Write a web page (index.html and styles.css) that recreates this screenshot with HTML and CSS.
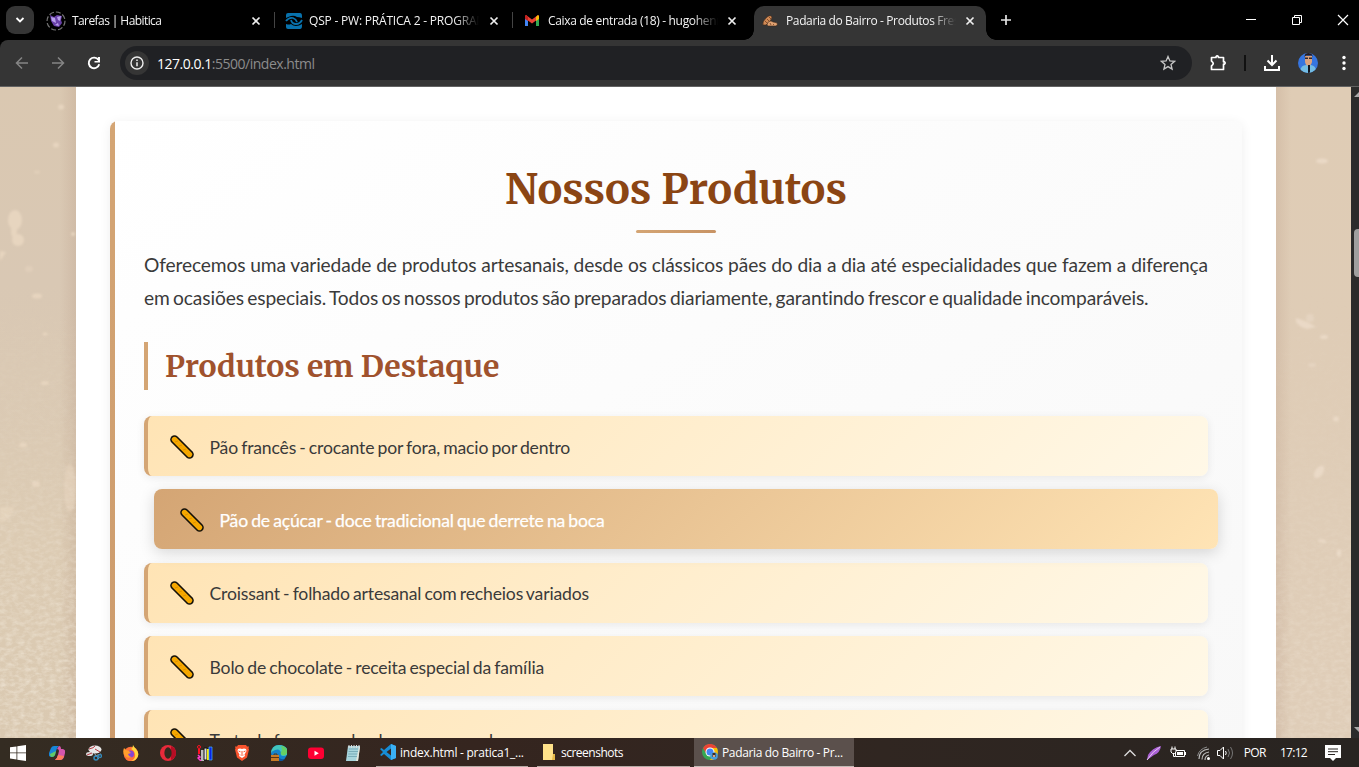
FILE: index.html
```html
<!DOCTYPE html>
<html lang="pt-BR">
<head>
<meta charset="utf-8">
<title>Padaria do Bairro - Produtos Frescos</title>
<link rel="stylesheet" href="styles.css">
</head>
<body>
<svg class="defs" aria-hidden="true">
  <symbol id="x" viewBox="0 0 10 10"><path d="M1.5 1.5l7 7M8.500 1.500l-7 7" fill="none" stroke="#eee" stroke-width="1.700"/></symbol>
  <symbol id="baguette" viewBox="0 0 26 26"><path d="M5.500 5.500L20.500 20.500" stroke="#14110a" stroke-width="8.600" stroke-linecap="round"/><path d="M5.500 5.500L20.500 20.500" stroke="#f5a700" stroke-width="5.400" stroke-linecap="round"/><path d="M6 8l3-1M10 12l3-1M14 16l3-1" stroke="#d98d00" stroke-width=".8"/></symbol>
</svg>
<div class="screen">
  <header class="tabstrip">
    <div class="tab-search"><svg width="10" height="10" viewBox="0 0 10 10"><path d="M1.500 3l3.500 3.500L8.500 3" fill="none" stroke="#fff" stroke-width="1.800"/></svg></div>
    <div class="tab">
      <svg class="fav" viewBox="0 0 20 20"><circle cx="10" cy="10" r="9" fill="none" stroke="#777" stroke-width="1.200" stroke-dasharray="5 2"/><path d="M4 4l4 2 3-2 5 1-1 4 1 3-3 4-5-1-3-5z" fill="#6840a8"/><path d="M5 6l4 1 1 5-4-2zM11 6l4-1-1 5-2-1zM9 14l3-2 1 3z" fill="#b9a0eb"/></svg>
      <span class="title t1">Tarefas | Habitica</span><svg class="close"><use href="#x"/></svg>
    </div>
    <div class="tab">
      <svg class="fav f2" viewBox="0 0 20 20"><path d="M2 4q0-2 2-2h12q2 0 2 3v2q-3-1-5-1-3-2-6-1-3 1-5 2zM2 16q0 2 2 2h12q2 0 2-3v-2q-3 2-6 2-3 0-5-2-2 1-5 0z" fill="#0872ad"/><path d="M2 10q3-4 7-3 3 1 4 4M7 9q1 4 5 4 4 0 6-4" fill="none" stroke="#0872ad" stroke-width="1.800"/></svg>
      <span class="title t2">QSP - PW: PRÁTICA 2 - PROGRAMAÇÃO</span><svg class="close"><use href="#x"/></svg>
    </div>
    <div class="tab">
      <svg class="fav gm" viewBox="0 0 16 16"><path d="M1 4v9h3V6z" fill="#4285f4"/><path d="M15 4v9h-3V6z" fill="#34a853"/><path d="M1 3l1-1 6 4.500L14 2l1 1-1 3-6 4.500L2 6z" fill="#ea4335"/><path d="M12 4l2-2 1 1v3l-3 2z" fill="#fbbc04"/><path d="M1 3l1-1 2 1.500V8L1 6z" fill="#c5221f"/></svg>
      <span class="title t3">Caixa de entrada (18) - hugohenrique</span><svg class="close"><use href="#x"/></svg>
    </div>
    <div class="tab active">
      <svg class="fav gm" viewBox="0 0 16 16"><path d="M1 12Q0 9 4 5q4-4 6-1 0 3-6 8z" fill="#d18a55" stroke="#3b2517" stroke-width=".6"/><path d="M5 12q0-3 3-4 2 0 3 1 4 0 4.500 2 0 2-2 2H6z" fill="#e0a271" stroke="#3b2517" stroke-width=".6"/><path d="M3 8l2 2M5 6l2 2M7 4l2 2M8 10l1 2M11 11l1 1" stroke="#754020" stroke-width=".8"/></svg>
      <span class="title t4">Padaria do Bairro - Produtos Frescos</span><svg class="close"><use href="#x"/></svg>
    </div>
    <svg class="newtab" viewBox="0 0 12 12"><path d="M6 1v10M1 6h10" stroke="#e4e4e4" stroke-width="1.700"/></svg>
    <div class="winbtns">
      <svg width="12" height="12"><path d="M1 5.500h10" stroke="#fff"/></svg>
      <svg width="12" height="12"><path d="M1.500 3.500h7v7h-7zM3.500 3.500v-2h7v7h-2" fill="none" stroke="#fff"/></svg>
      <svg width="12" height="12"><path d="M1 1l10 10M11 1L1 11" stroke="#fff" stroke-width="1.200"/></svg>
    </div>
  </header>
  <nav class="toolbar">
    <svg class="nav" viewBox="0 0 16 16"><path d="M14 8H3M8 2.500L2.500 8 8 13.500" fill="none" stroke="#858585" stroke-width="1.500"/></svg>
    <svg class="nav" viewBox="0 0 16 16"><path d="M2 8h11M8 2.500L13.500 8 8 13.500" fill="none" stroke="#858585" stroke-width="1.500"/></svg>
    <svg class="nav" viewBox="0 0 16 16"><path d="M12.500 5A5.300 5.300 0 1 0 13.200 9.200" fill="none" stroke="#fff" stroke-width="1.900"/><path d="M14 2v5.500H8.500V6H12V2z" fill="#fff"/></svg>
    <div class="omnibox">
      <span class="info"><svg width="14" height="14"><circle cx="7" cy="7" r="6" fill="none" stroke="#eee" stroke-width="1.400"/><path d="M7 6.200v4M7 3.500v1.500" stroke="#eee" stroke-width="1.500"/></svg></span>
      <span class="url"><b>127.0.0.1</b>:5500/index.html</span>
      <svg class="star" viewBox="0 0 16 16"><path d="M8 1.500l1.900 4.400 4.700.4-3.600 3.100 1.100 4.700L8 11.600l-4.100 2.500L5 9.400 1.400 6.300l4.700-.4z" fill="none" stroke="#c7c7c7" stroke-width="1.300"/></svg>
    </div>
    <div class="actions">
      <svg width="18" height="18" viewBox="0 0 18 18"><path d="M2.500 3.500H7V2.700q1.200-1.700 2.400 0v.8H14.500v4.300h.8q1.700 1.200 0 2.400h-.8v5.300h-12v-3.600q3.500-2.400 0-4.800z" fill="none" stroke="#fff" stroke-width="1.700" stroke-linejoin="round"/></svg>
      <i class="divider"></i>
      <svg width="18" height="18" viewBox="0 0 18 18"><path d="M9 1v9M4.500 6.500L9 11l4.500-4.500M2 12v4h14v-4" fill="none" stroke="#fff" stroke-width="2"/></svg>
      <svg width="20" height="20" viewBox="0 0 20 20"><defs><clipPath id="av"><circle cx="10" cy="10" r="10"/></clipPath></defs><g clip-path="url(#av)"><path d="M0 0h20v20H0z" fill="#3675df"/><path d="M2 18q1-6 6-6h5q5 1 5 6v3H2z" fill="#73bce3"/><path d="M7 3h7v6q-1 4-4 4-3-1-3-5z" fill="#dba37e"/><path d="M6.500 4q0-4 4-4t4 4l-1-1.500H8z" fill="#2a1b18"/><path d="M7 4.500h3v1.500H7zm4 0h3v1.500h-3z" fill="#332629"/><path d="M10 12h2v8h-2z" fill="#121722"/></g></svg>
      <svg class="dots" width="4" height="16"><circle cx="2" cy="2.500" r="1.700" fill="#fff"/><circle cx="2" cy="8" r="1.700" fill="#fff"/><circle cx="2" cy="13.500" r="1.700" fill="#fff"/></svg>
    </div>
  </nav>
  <section class="viewport">
    <div class="paper">
      <svg width="76" height="651"><defs><filter id="soft"><feGaussianBlur stdDeviation="1.300"/></filter>
        <filter id="grain" x="0" y="0" width="100%" height="100%"><feTurbulence type="fractalNoise" baseFrequency=".16 .26" numOctaves="3" seed="5"/><feColorMatrix values="0 0 0 0 .92 0 0 0 0 .86 0 0 0 0 .76 1.800 0 0 0 -.65"/></filter>
        <linearGradient id="fade" x1="0" y1="0" x2="0" y2="1"><stop offset=".3" stop-color="#000"/><stop offset=".6" stop-color="#333"/><stop offset=".9" stop-color="#bbb"/></linearGradient><mask id="gm"><path fill="url(#fade)" d="M0 0h76v651H0z"/></mask></defs>
        <g filter="url(#soft)" fill="#e7d5bf"><ellipse cx="61" cy="20" rx="3" ry="2.500"/><ellipse cx="56" cy="58" rx="3" ry="2.500"/><ellipse cx="37" cy="85" rx="3" ry="1.500" opacity=".6"/><ellipse cx="15" cy="133" rx="7" ry="10"/><ellipse cx="14" cy="144" rx="3" ry="7"/><ellipse cx="18" cy="153" rx="6" ry="6"/><ellipse cx="73" cy="147" rx="2" ry="2"/><path d="M0 164l6 1-6 9z"/><ellipse cx="37" cy="209" rx="5" ry="2.500"/><ellipse cx="29" cy="182" rx="4" ry="3" opacity=".5"/><ellipse cx="45" cy="247" rx="2.500" ry="1.500"/><ellipse cx="45" cy="296" rx="4" ry="2"/><ellipse cx="23" cy="358" rx="4" ry="2.500"/><ellipse cx="36" cy="397" rx="4" ry="3"/><ellipse cx="70" cy="401" rx="6" ry="24" opacity=".6"/><path d="M0 420h14q-2 12-14 16z" opacity=".7"/></g>
        <g mask="url(#gm)" opacity=".75"><path d="M0 0h76v651H0z" filter="url(#grain)"/></g></svg>
    </div>
    <main class="container">
      <article class="card">
        <h1>Nossos Produtos</h1>
        <p class="intro">Oferecemos uma variedade de produtos artesanais, desde os clássicos pães do dia a dia até especialidades que fazem a diferença em&nbsp;ocasiões especiais. Todos os nossos produtos são preparados diariamente, garantindo frescor e qualidade incomparáveis.</p>
        <h2>Produtos em Destaque</h2>
        <ul>
          <li><svg><use href="#baguette"/></svg><span>Pão francês - crocante por fora, macio por dentro</span></li>
          <li class="hover"><svg><use href="#baguette"/></svg><span>Pão de açúcar - doce tradicional que derrete na boca</span></li>
          <li><svg><use href="#baguette"/></svg><span>Croissant - folhado artesanal com recheios variados</span></li>
          <li><svg><use href="#baguette"/></svg><span>Bolo de chocolate - receita especial da família</span></li>
          <li><svg><use href="#baguette"/></svg><span>Torta de frango - salgada cremosa e saborosa</span></li>
        </ul>
      </article>
    </main>
    <div class="paper right">
      <svg width="75" height="651"><g filter="url(#soft)" fill="#ead9c6"><ellipse cx="46" cy="74" rx="6" ry="2.500"/><path d="M20 231q11 3 20 9l-9 2q-8-2-11-7z"/><ellipse cx="34" cy="231" rx="4" ry="4" opacity=".6"/><ellipse cx="48" cy="250" rx="4" ry="2"/><ellipse cx="36" cy="278" rx="4" ry="2" opacity=".6"/><ellipse cx="60" cy="332" rx="3" ry="2.500"/><ellipse cx="43" cy="385" rx="4" ry="7" transform="rotate(35 43 385)"/><ellipse cx="63" cy="466" rx="2" ry="4"/><ellipse cx="46" cy="454" rx="4" ry="1.500"/></g><g mask="url(#gm)" opacity=".35"><path d="M0 0h76v651H0z" filter="url(#grain)"/></g></svg>
    </div>
    <div class="scroll"><svg width="8" height="651"><path d="M3 10l5-5v5zM3 640h5v5z" fill="#aaa"/><rect x="3" y="142" width="12" height="48" rx="4" fill="#9f9f9f"/></svg></div>
  </section>
  <footer class="taskbar">
    <div class="icons">
      <svg viewBox="0 0 16 16"><path d="M0 2.300L6.500 1.400V7.500H0zM7.300 1.300L16 0V7.500H7.300zM0 8.300h6.500v6.200L0 13.600zM7.300 8.300H16V16l-8.700-1.300z" fill="#fff"/></svg>
      <svg viewBox="0 0 16 16"><path d="M2 3q1-2 3-2h5q-2 1-3 5l-1 4q-1 2-3 2H2q-3-1-2-4z" fill="#1785d8"/><path d="M1 9l6-3-1 4q-1 2-3 2-2 0-2-3z" fill="#62c866"/><path d="M10 1q2 0 2 3h2q3 1 2 4l-1 4q-1 3-4 3H6q2-1 3-5l1-4q0-2-2-2z" fill="#d456ad"/><path d="M6 15q2-1 3-5l6 1q-1 4-4 4z" fill="#ff7c5d"/></svg>
      <svg viewBox="0 0 16 16"><ellipse cx="9" cy="4.500" rx="6.500" ry="4" fill="#e8e8e8"/><path d="M3 4q5-1 6-3M9 4l5 3" stroke="#b63a42" fill="none"/><ellipse cx="3.500" cy="9" rx="3.500" ry="2" fill="#ddd"/><path d="M1 10l5-2" stroke="#b63a42"/><path d="M8 8l5 6M15 9l-6 2" stroke="#aaa"/><circle cx="10" cy="13" r="2" fill="none" stroke="#3389b9" stroke-width="1.500"/><circle cx="14" cy="11" r="1.500" fill="none" stroke="#3389b9" stroke-width="1.300"/></svg>
      <svg viewBox="0 0 16 16"><circle cx="8" cy="9" r="7.300" fill="#ff7139"/><path d="M10 0q1 2 3 4 4 5 1 9-2 3-6 3 5-2 4-7-1-4-4-5 2-1 2-4z" fill="#ffd83f"/><circle cx="7.500" cy="9" r="3.500" fill="#8545d5"/><path d="M1 3l2 2 3 1 2 2-3 1q1 3 4 3-4 2-7-1T1 3z" fill="#ff9e2c"/></svg>
      <svg viewBox="0 0 16 16"><ellipse cx="8" cy="8" rx="8" ry="8" fill="#e82a3a"/><path d="M11 1q5 2 5 7t-5 7z" fill="#b70d24"/><ellipse cx="8" cy="8" rx="3.600" ry="5.800" fill="#33291f"/></svg>
      <svg viewBox="0 0 16 16"><path d="M4 5h3v11H4z" fill="#bbb"/><path d="M7 3h3v12H7z" fill="#ddd" stroke="#111"/><path d="M10 4h2v11h-2z" fill="#f4e900"/><path d="M12 2h3v13h-3z" fill="#0824e8" stroke="#46b7ff" stroke-width=".7"/><circle cx="2" cy="2" r="1.500" fill="none" stroke="#f12"/><path d="M2 4v5" stroke="#f12" stroke-width="2"/><path d="M1 10l2 2-2 1 3 3" stroke="#ff3fd0" stroke-width="1.500" fill="none"/></svg>
      <svg viewBox="0 0 16 16"><path d="M4 0h8l1 1.500h2l-.5 2 .5 1-2 8-5 3.500-5-3.500-2-8 .5-1-.5-2h2z" fill="#f9532d"/><path d="M4 4l2-.5 2 .5 2-.5 2 .5.500 2-2 3.500.5 1.500L8 13l-3-2 .5-1.500L3.500 6z" fill="#fff"/><path d="M4.500 6l2 .8M11.500 6l-2 .8M8 6v3M6.500 10h3" stroke="#f9532d"/></svg>
      <svg viewBox="0 0 16 16"><circle cx="8" cy="8" r="8" fill="#1383cb"/><path d="M0 8q1-8 8-8 8 0 9 7 0 4-5 4-3 0-2-3Q9 3 4 5 1 6 0 8z" fill="#42c6bd"/><path d="M10 1q7 1 6 7-1 3-5 2-2-1-1-3 2-2 0-6z" fill="#65d064"/><path d="M8 8q-2 7 6 6-3 3-7 2z" fill="#0b559e"/><path d="M0 10h8v6H0z" fill="#c67b25"/><path d="M0 12.500h8M3 10V9h3v1" stroke="#593312" fill="none"/></svg>
      <svg viewBox="0 0 16 16"><rect y="2.500" width="16" height="11.500" rx="3" fill="#ff0033"/><path d="M6.500 5.700v5l4.300-2.500z" fill="#fff"/></svg>
      <svg viewBox="0 0 16 16"><path d="M3 1h12l-2 15H1z" fill="#a8d5dc"/><path d="M4 4h9M3.600 6.500H13M3.300 9h9.300M3 11.500h9" stroke="#659ca9" stroke-width=".7"/><path d="M14 2l1 0-2 14h-2z" fill="#e6e6db"/><path d="M4 0v3M6.500 0v3M9 0v3M11.500 0v3M14 0v3" stroke="#ddd"/></svg>
    </div>
    <div class="task"><svg viewBox="0 0 16 16"><path d="M11 0l5 2v12l-5 2-7-6-2.500 2L0 11l3-3-3-3 1.500-1L4 6zm0 4.500L6.500 8l4.500 3.500z" fill="#168dd5"/><path d="M11 0l5 2v12l-5 2z" fill="#3bb1f4"/></svg><span class="k1">index.html - pratica1_...</span></div>
    <div class="task mid"><svg viewBox="0 0 16 16"><path d="M2 0h10v10h2v6H2z" fill="#ffe28a"/><path d="M12 10h2v6h-3z" fill="#e6b948"/></svg><span class="k2">screenshots</span></div>
    <div class="task on"><svg viewBox="0 0 16 16"><circle cx="8" cy="8" r="8" fill="#35a853"/><path d="M1 4A8 8 0 0 1 15 4H8L4.500 10z" fill="#ea4335"/><path d="M8 4h7q3 7-4 12H8l4-7z" fill="#fbbc04"/><circle cx="8" cy="8" r="4.500" fill="#fff"/><circle cx="8" cy="8" r="3.500" fill="#4285f4"/><circle cx="12" cy="12" r="3.800" fill="#4a9dda"/><path d="M10.500 9h3v4h-3z" fill="#3b2b28"/><path d="M11 11h2v2h-2z" fill="#dda57c"/></svg><span class="k3">Padaria do Bairro - Pr...</span></div>
    <div class="tray">
      <svg width="14" height="16"><path d="M1.500 11L7 5.500 12.500 11" fill="none" stroke="#ddd" stroke-width="1.300"/></svg>
      <svg width="16" height="16"><path d="M1 15L2 10Q6 3 15 1q-1 7-7 9z" fill="#aa61d5"/><path d="M1 15Q7 6 14 2" stroke="#e6c7f3" fill="none"/></svg>
      <svg width="16" height="16"><path d="M5.500 5.500h9v6h-9zM15.500 7v3" fill="none" stroke="#fff"/><path d="M7 7h6v3H7z" fill="#fff"/><path d="M1 4h5v3L4.500 8.500h-2L1 7zM2 4V1.500M5 4V1.500M3.500 8.500v3h2" fill="#302621" stroke="#fff"/></svg>
      <svg width="16" height="16"><g fill="none" stroke="#bbb" stroke-width="1.200"><path d="M3 14Q3 5 13 4M6 14.500Q6 8 13 7M9 15Q9 11 13 10"/></g><path d="M1.500 11Q3 4 11 2" fill="none" stroke="#888"/><circle cx="12.500" cy="13.500" r="1.500" fill="#fff"/></svg>
      <svg width="18" height="16"><path d="M1.500 5.500H4L7.500 2v12L4 10.500H1.500z" fill="none" stroke="#fff"/><path d="M9.500 6q1.500 2 0 4" fill="none" stroke="#fff"/><path d="M12 4q3 4 0 8M14.500 2q4 6 0 12" fill="none" stroke="#777"/></svg>
      <span class="lang">POR</span><span class="clock">17:12</span>
      <svg class="note" width="16" height="16"><path d="M0 0h16v13h-5l-3 3-3-3H0z" fill="#fff"/><path d="M3 4h10M3 6.700h10M3 9.500h7" stroke="#292421"/></svg>
    </div>
  </footer>
</div>
</body>
</html>
```
FILE: styles.css
```css
*{box-sizing:border-box}
body{margin:0;overflow:hidden;font-family:"Segoe UI","Open Sans","Noto Sans",sans-serif;background:#000}
svg{display:block;flex:none}
.defs{position:absolute;width:0;height:0}
.screen{width:1359px;height:767px;display:grid;grid-template-rows:40px 47px 651px 29px}
.tabstrip{display:flex;background:#000;color:#f3f3f3;padding-left:6px}
.tab-search{width:28px;height:28px;margin:6px 6px 0 0;border-radius:9px;background:#353535;display:grid;place-items:center}
.tab{position:relative;width:232px;height:34px;margin:6px 6px 0 0;display:flex;align-items:center;padding:0 11px 5px 6px}
.tab:not(.active)::after{content:"";position:absolute;left:234px;top:6px;width:1px;height:16px;background:#444}
.tab:nth-child(4)::after{display:none}
.active{background:#353535;border-radius:10px 10px 0 0}
.active::before,.active::after{content:"";position:absolute;bottom:0;width:10px;height:10px}
.active::before{left:-10px;background:radial-gradient(circle at 0 0,transparent 9.5px,#353535 10px)}
.active::after{right:-10px;background:radial-gradient(circle at 100% 0,transparent 9.5px,#353535 10px)}
.fav{width:20px;height:20px;margin-right:6px}
.f2{margin-right:5px}
.gm{width:16px;height:16px;margin:0 8px 0 2px}
.title{width:170px;flex:none;font-size:12px;line-height:18px;white-space:nowrap;overflow:hidden;-webkit-mask-image:linear-gradient(90deg,#000 145px,transparent 170px);mask-image:linear-gradient(90deg,#000 145px,transparent 170px)}
.t1{letter-spacing:-.58px}.t2{letter-spacing:-.2px}.t3{letter-spacing:-.33px}.t4{letter-spacing:-.38px}
.close{width:10px;height:10px;margin-left:auto}
.newtab{width:12px;height:12px;margin:14px 0 0 8px}
.winbtns{display:flex;gap:34px;margin:14px 10px 0 auto}
.toolbar{display:flex;align-items:center;background:#353535;border-bottom:1px solid #626262;padding:0 13px 0 14px;border-radius:8px 0 0}
.nav{width:16px;height:16px;margin-right:20px}
.nav:nth-child(3){margin-right:18px}
.omnibox{width:1072px;height:34px;margin-right:17px;border-radius:17px;background:#202124;display:flex;align-items:center;padding:0 16px 0 5px}
.info{width:24px;height:24px;border-radius:50%;background:#353535;display:grid;place-items:center;margin-right:8px}
.url{font-size:14px;color:#8c8c8c;letter-spacing:-.48px;white-space:nowrap}
.url b{font-weight:400;color:#fff}
.star{width:16px;height:16px;margin-left:auto}
.actions{display:flex;align-items:center;gap:17px}
.dots{margin-left:7px}
.divider{width:2px;height:16px;background:#111}
.viewport{display:grid;grid-template-columns:76px 1200px 75px 8px;overflow:hidden;background:#fff}
.paper{overflow:hidden;background:linear-gradient(90deg,transparent 60px,rgba(150,110,90,.14)),linear-gradient(#dac8b1,#d9c8b4 30%,#dccbb3 70%,#dac9b1)}
.right{background:linear-gradient(270deg,transparent 60px,rgba(150,110,90,.14)),linear-gradient(#dfccb5,#dfcdb8)}
.container{padding:34px;overflow:hidden;background:#fff}
.card{height:900px;padding:29px 34px;border-radius:8px;background:linear-gradient(#d4a574,#c99668) 0 0/5px 100% no-repeat,linear-gradient(145deg,#fff,#f8f8f8 85%);box-shadow:0 2px 12px rgba(0,0,0,.07)}
.card h1{margin:0;height:101px;padding-top:10px;text-align:center;color:#8b4513;font:700 41.6px/58px "Merriweather","Liberation Serif",serif}
.card h1::after{content:"";display:block;width:80px;height:3px;margin:12px auto 0;border-radius:2px;background:linear-gradient(90deg,#d4a574,#c89364)}
.intro{margin:-3px 0 28px;color:#3a3a3a;font:19.2px/33px Lato,sans-serif;letter-spacing:-.13px;word-spacing:-1.35px;font-variant-ligatures:none;text-align:justify}
.card h2{margin:0 0 26px;height:48px;padding-left:17px;border-left:4px solid #d4a574;color:#a0522d;font:700 30.2px/48px "Merriweather","Liberation Serif",serif}
.card ul{list-style:none;margin:0;padding:0;display:grid;gap:13.4px}
.card li{height:60px;display:flex;align-items:center;padding:3px 20px 0 21px;border-left:4px solid #d4a574;border-radius:8px;background:linear-gradient(135deg,#ffe4b5,#fff8e7);color:#3a3a3a;box-shadow:0 2px 8px rgba(0,0,0,.08);font:17.6px/30px Lato,sans-serif;letter-spacing:-.17px;word-spacing:-1.15px;font-variant-ligatures:none}
.card li svg{width:26px;height:26px;margin:0 14.5px 2px 0}
.card li.hover{transform:translateX(10px);color:#fff;border-color:transparent;background:linear-gradient(135deg,#d4a574,#ffe4b5) border-box;box-shadow:0 4px 15px rgba(0,0,0,.15);-webkit-text-stroke:.25px #fff}
.scroll{background:#2b2b2b}
.taskbar{display:flex;position:relative;background:linear-gradient(90deg,#342c22,#35251f 35%,#302621 65%,#282421);color:#fff}
.icons{display:flex;gap:21px;padding:7px 0 0 10px;width:376px}
.icons svg:first-child{margin-right:2px}
.icons svg,.task svg{width:16px;height:16px}
.task{width:152px;display:flex;align-items:center;padding:0 0 0 4px;border-bottom:1px solid #b5aaa4;font-size:12px;white-space:nowrap}
.task svg{margin-right:4px}
.mid{width:153px;margin:0 4px 0 9px}
.on{width:160px;background:#5b504c;border-bottom-color:#c2bab5;padding-left:8px}
.k1{letter-spacing:-.25px}.k2{letter-spacing:-.5px}.k3{letter-spacing:-.35px}
.tray{margin-left:auto;display:flex;align-items:center;padding-right:18px;font-size:12px}
.tray svg{margin-right:9px}
.tray svg:nth-of-type(2){margin-right:8px}
.tray svg:nth-of-type(3){margin-right:10px}
.tray svg:nth-of-type(4){margin-right:4px}
.tray svg:nth-of-type(5){margin-right:8px}
.lang{letter-spacing:-.6px;margin:0 14px 0 2px}
.clock{letter-spacing:-.7px;margin-right:18px}
.tray svg.note{margin:0}
```
